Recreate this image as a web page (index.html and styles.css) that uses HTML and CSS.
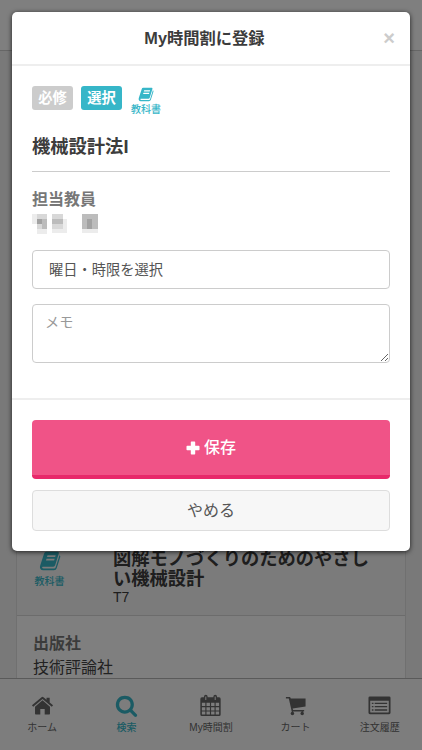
FILE: index.html
```html
<!DOCTYPE html>
<html lang="ja">
<head>
<meta charset="utf-8">
<meta name="viewport" content="width=device-width">
<title>My時間割に登録</title>
<link rel="stylesheet" href="styles.css">
</head>
<body>
<svg class="defs" width="0" height="0" aria-hidden="true">
  <symbol id="book" viewBox="0 0 24 24"><path fill-rule="evenodd" d="M8 2h12.500q1.600 0 1.100 1.700l-4 13q-.5 1.500-2 1.500H4.200q-1 .2-.8 1 .3 1 1.600 1h11.500q1.200 0 1.600-1.200L22.300 5.600q1.300.6.900 2L19.300 20q-.7 2.200-3 2.200H4.300q-2.600 0-3.200-2.500-.3-1.400.2-2.900L5.500 4Q6 2 8 2zM9.300 5.700l-.6 1.900h8.900l.6-1.900zM8.200 9.500l-.6 1.900h8.900l.6-1.900z"/></symbol>
</svg>
<div class="page">
  <header class="topbar"></header>
  <main class="content">
    <article class="card">
      <section class="book-row">
        <div class="book-mark"><svg class="book-large"><use href="#book"/></svg><span>教科書</span></div>
        <div class="book-info"><h3>図解モノづくりのためのやさしい機械設計</h3><p>T7</p></div>
      </section>
      <section class="publisher"><h4>出版社</h4><p>技術評論社</p></section>
    </article>
  </main>
  <nav class="tabs">
    <a class="tab"><svg viewBox="0 0 24 24"><path d="M12 6.500l7.800 6.700v7.300a.8.8 0 0 1-.8.800h-4.700v-5.600H9.700v5.600H5a.8.8 0 0 1-.8-.8v-7.300z"/><path d="M11 3.300q1-.8 2 0l3.200 2.700V3.800h3.300v5l3.500 3-1.300 1.500L12 5.300l-9.700 8L1 11.800z"/></svg><span>ホーム</span></a>
    <a class="tab active"><svg viewBox="0 0 1792 1792"><path d="M1216 832q0-185-131.5-316.5t-316.5-131.5-316.5 131.5-131.5 316.5 131.5 316.5 316.5 131.5 316.5-131.5 131.5-316.500zm512 832q0 52-38 90t-90 38q-54 0-90-38l-343-342q-179 124-399 124-143 0-273.5-55.5t-225-150-150-225-55.5-273.5 55.5-273.5 150-225 225-150 273.5-55.5 273.5 55.5 225 150 150 225 55.5 273.5q0 220-124 399l343 343q37 37 37 90z"/></svg><span>検索</span></a>
    <a class="tab"><svg viewBox="0 0 24 24"><path fill-rule="evenodd" d="M3 3.500h2.200V2.800a1.900 1.900 0 0 1 3.800 0v.7h6v-.7a1.900 1.900 0 0 1 3.800 0v.7H21a1.600 1.600 0 0 1 1.600 1.600v16.300A1.600 1.600 0 0 1 21 23H3a1.600 1.600 0 0 1-1.600-1.600V5.100A1.600 1.600 0 0 1 3 3.500zM6.600 2.600v3.600h1V2.600zm9.800 0v3.600h1V2.600zM3 9v3.600h3.600V9zm4.800 0v3.600h3.600V9zm4.800 0v3.600h3.600V9zm4.800 0v3.600H21V9zM3 13.700v3.400h3.600v-3.400zm4.800 0v3.400h3.600v-3.400zm4.800 0v3.400h3.600v-3.400zm4.800 0v3.400H21v-3.400zM3 18.200v3.200h3.600v-3.200zm4.800 0v3.200h3.600v-3.200zm4.800 0v3.200h3.600v-3.200zm4.800 0v3.200H21v-3.200z"/></svg><span>My時間割</span></a>
    <a class="tab"><svg viewBox="0 0 24 24"><path d="M2 3h4.300l.8 1.800H22.500v8.200L9 15l.5 1.700h11.500v1.500H8.100L5 4.700H2z"/><circle cx="8.800" cy="20.300" r="1.800"/><circle cx="19" cy="20.300" r="1.800"/><path d="M8.200 17h1.300v3H8.200zM18.400 17h1.300v3h-1.300z"/></svg><span>カート</span></a>
    <a class="tab"><svg viewBox="0 0 24 24"><path fill-rule="evenodd" d="M2 2.500h20A1.500 1.500 0 0 1 23.500 4v15.500A1.500 1.500 0 0 1 22 21H2a1.500 1.500 0 0 1-1.500-1.500V4A1.500 1.500 0 0 1 2 2.500zM2.300 7v11.700q0 .5.500.500h18.400q.5 0 .5-.5V7z"/><path d="M4 9h1.700v1.400H4zm3 0h13v1.400H7zm-3 3.500h1.700v1.400H4zm3 0h13v1.400H7zM4 16h1.700v1.400H4zM7 16h13v1.400H7z"/></svg><span>注文履歴</span></a>
  </nav>
</div>
<div class="backdrop">
  <div class="modal" role="dialog">
    <header class="modal-head"><h1>My時間割に登録</h1><button class="close" aria-label="閉じる">×</button></header>
    <div class="modal-body">
      <div class="labels"><span class="label">必修</span><span class="label on">選択</span><div class="textbook"><svg class="book-small"><use href="#book"/></svg><span>教科書</span></div></div>
      <h2>機械設計法I</h2>
      <h4 class="teacher">担当教員</h4>
      <svg class="mosaic" viewBox="0 0 66 20" shape-rendering="crispEdges">
        <path fill="#ececec" d="M0 0h5v10H0zM5 15h10v5H5zM20 15h15v4H20zM31 5h4v10h-4zM50 15h16v4H50z"/>
        <path fill="#d8d8d8" d="M5 0h10v5H5zM20 0h11v5H20zM5 10h5v5H5zM20 10h11v5H20z"/>
        <path fill="#bcbcbc" d="M5 5h10v5H5zM10 10h5v5h-5zM20 5h11v5H20zM50 0h16v15H50z"/>
        <path fill="#a2a2a2" d="M5 5h5v5H5zM55 5h5v10h-5z"/>
      </svg>
      <div class="select">曜日・時限を選択</div>
      <textarea class="memo" placeholder="メモ"></textarea>
    </div>
    <footer class="modal-foot">
      <button class="save"><svg viewBox="0 0 14 14"><path d="M5.500.5h3q.7 0 .7.700v3.600h3.600q.7 0 .7.700v3q0 .7-.7.700H9.200v3.600q0 .7-.7.700h-3q-.7 0-.7-.7V9.200H1.200q-.7 0-.7-.7v-3q0-.7.700-.7h3.600V1.200q0-.7.700-.7z"/></svg><span>保存</span></button>
      <button class="cancel">やめる</button>
    </footer>
  </div>
</div>
</body>
</html>
```
FILE: styles.css
```css
* { box-sizing: border-box; }
body { margin: 0; height: 750px; overflow: hidden; color: #3c3c3c; font: 16px/24px "Liberation Sans", "Noto Sans CJK JP", sans-serif; }
h1, h2, h3, h4, p { margin: 0; }
button { padding: 0; border: 0; font: inherit; }
svg { fill: currentColor; display: block; flex: none; }
.defs { position: absolute; }
.page { height: 750px; display: flex; flex-direction: column; background: #f3f3f3; }
.topbar { height: 51px; flex: none; background: #fff; border-bottom: 1px solid #ccc; }
.content { flex: 1; min-height: 0; padding: 14px 16px 0; }
.card { height: 100%; display: flex; flex-direction: column; background: #fff; border: 1px solid #e0e0e0; border-bottom: 0; }
.book-row { flex: 1; display: flex; align-items: flex-end; background: #f7f7f7; border-bottom: 1px solid #d8d8d8; padding-bottom: 9px; }
.book-mark { width: 65px; margin-bottom: 17px; display: flex; flex-direction: column; align-items: center; color: #36b6c8; font-size: 10px; font-weight: 500; line-height: 14px; }
.book-large { width: 22px; height: 24px; margin-bottom: 2px; }
.book-info { width: 262px; margin-left: 31px; }
.book-info h3 { font-size: 18.3px; line-height: 20px; font-weight: 700; }
.book-info p { font-size: 14px; line-height: 17px; }
.publisher { height: 62px; flex: none; padding: 16px 16px 0; }
.publisher h4 { color: #777; }
.publisher p { line-height: 24px; white-space: nowrap; color: #444; }
.tabs { height: 72px; flex: none; display: grid; grid-template-columns: repeat(5, 1fr); background: #fafafa; border-top: 1px solid #b5b5b5; color: #666; }
.tab { display: flex; flex-direction: column; align-items: center; padding-top: 15px; gap: 2px; font-size: 10px; line-height: 18px; }
.tab svg { width: 23px; height: 23px; }
.tab.active { color: #36b6c8; font-weight: 500; }
.backdrop { position: absolute; inset: 0; padding: 12px 12px 0; background: rgba(0, 0, 0, .5); }
.modal { height: 539px; border-radius: 5px; background: #fff; box-shadow: 0 1px 5px rgba(0, 0, 0, .75); }
.modal-head { height: 54px; border-bottom: 2px solid #eee; display: grid; grid-template-columns: 31px 1fr 44px; align-items: center; }
.modal-head h1 { grid-column: 2; text-align: center; font-size: 16.3px; }
.close { background: none; color: #ccc; font: 700 20px/24px "Liberation Sans", sans-serif; padding-left: 2px; }
.modal-body { height: 334px; padding: 20px; border-bottom: 2px solid #eee; }
.labels { height: 32px; display: flex; align-items: flex-start; gap: 8px; }
.label { width: 41px; height: 24px; border-radius: 3px; background: #ccc; color: #fff; text-align: center; font-size: 14.3px; line-height: 24px; font-weight: 700; }
.label.on { background: #36b6c8; }
.textbook { width: 32px; display: flex; flex-direction: column; align-items: center; color: #36b6c8; font-size: 10px; font-weight: 500; line-height: 14px; white-space: nowrap; }
.book-small { width: 16px; height: 17px; }
.modal-body h2 { height: 54px; padding-top: 16px; border-bottom: 1px solid #ccc; font-size: 18.3px; line-height: 25px; }
.teacher { margin-top: 16px; color: #777; }
.mosaic { width: 66px; height: 20px; margin-top: 2px; }
.select { height: 39px; margin-top: 16px; padding: 0 16px; border: 1px solid #ccc; border-radius: 4px; font-size: 14.25px; line-height: 38px; color: #555; }
.memo { display: block; width: 100%; height: 59px; margin-top: 15px; padding: 6px 12px; border: 1px solid #ccc; border-radius: 4px; font: inherit; font-size: 14.2px; line-height: 22px; }
.memo::placeholder { color: #999; }
.modal-foot { padding: 20px; display: grid; gap: 11px; }
.save { height: 59px; display: flex; justify-content: center; align-items: center; gap: 4px; border-radius: 4px; background: #f05387; border-bottom: 4px solid #e8286a; color: #fff; font-weight: 500; }
.save svg { width: 14px; height: 14px; }
.cancel { height: 41px; background: #f7f7f7; border: 1px solid #ddd; border-radius: 4px; color: #555; }
```
